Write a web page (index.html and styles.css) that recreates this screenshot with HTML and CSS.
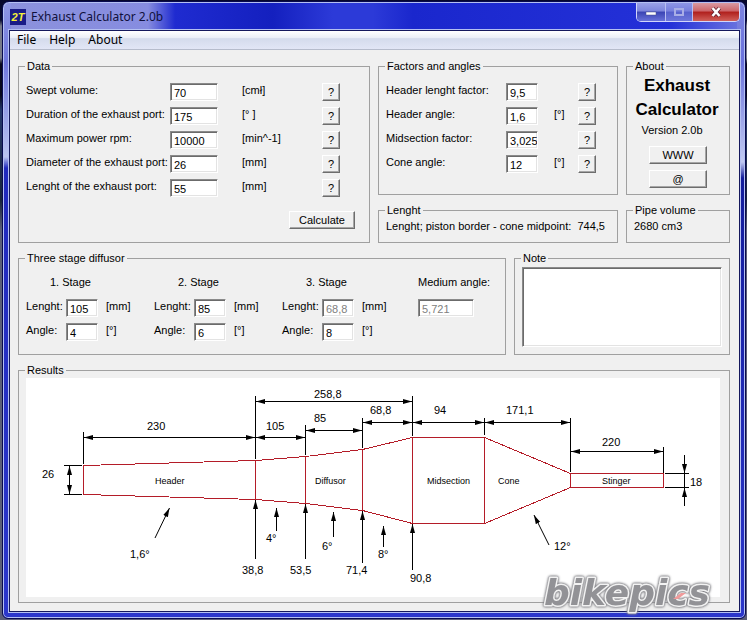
FILE: index.html
```html
<!DOCTYPE html>
<html lang="en">
<head>
<meta charset="utf-8">
<title>Exhaust Calculator 2.0b</title>
<link rel="stylesheet" href="styles.css">
</head>
<body>
<div class="window">
  <header class="titlebar">
    <svg class="app-icon" viewBox="0 0 16 16" aria-hidden="true"><rect width="16" height="16" fill="#1a1c86"/><text x="8" y="12" text-anchor="middle" class="app-icon-text">2T</text></svg>
    <h1 class="title">Exhaust Calculator 2.0b</h1>
    <div class="caption">
      <button type="button" class="cap cap-min" aria-label="Minimize"><svg width="12" height="12" viewBox="0 0 12 12"><rect x="1" y="6" width="10" height="3" fill="#fff" stroke="#4a4f88" stroke-width="0.5"/></svg></button>
      <button type="button" class="cap cap-max" aria-label="Maximize"><svg width="12" height="12" viewBox="0 0 12 12"><rect x="2" y="3" width="8" height="6" fill="none" stroke="#a9aee6" stroke-width="2"/></svg></button>
      <button type="button" class="cap cap-close" aria-label="Close"><svg width="12" height="12" viewBox="0 0 12 12"><path d="M2.5 2l7 8M9.500 2l-7 8" stroke="#5e2030" stroke-width="4"/><path d="M2.500 2l7 8M9.500 2l-7 8" stroke="#fff" stroke-width="2.600"/></svg></button>
    </div>
  </header>
  <div class="client">
    <nav class="menu"><button type="button">File</button><button type="button">Help</button><button type="button">About</button></nav>
    <form class="form">
      <div class="top">
        <fieldset class="group data">
          <legend>Data</legend>
          <div class="rows data-rows">
            <label for="sv">Swept volume:</label><input id="sv" value="70"><span>[cmł]</span><button type="button" class="btn help">?</button>
            <label for="du">Duration of the exhaust port:</label><input id="du" value="175"><span>[° ]</span><button type="button" class="btn help">?</button>
            <label for="rpm">Maximum power rpm:</label><input id="rpm" value="10000"><span>[min^-1]</span><button type="button" class="btn help">?</button>
            <label for="di">Diameter of the exhaust port:</label><input id="di" value="26"><span>[mm]</span><button type="button" class="btn help">?</button>
            <label for="le">Lenght of the exhaust port:</label><input id="le" value="55"><span>[mm]</span><button type="button" class="btn help">?</button>
          </div>
          <button type="button" class="btn calculate">Calculate</button>
        </fieldset>
        <fieldset class="group">
          <legend>Factors and angles</legend>
          <div class="rows factor-rows">
            <label for="hf">Header lenght factor:</label><input id="hf" value="9,5"><span></span><button type="button" class="btn help">?</button>
            <label for="ha">Header angle:</label><input id="ha" value="1,6"><span>[°]</span><button type="button" class="btn help">?</button>
            <label for="mf">Midsection factor:</label><input id="mf" value="3,025"><span></span><button type="button" class="btn help">?</button>
            <label for="ca">Cone angle:</label><input id="ca" value="12"><span>[°]</span><button type="button" class="btn help">?</button>
          </div>
        </fieldset>
        <fieldset class="group">
          <legend>About</legend>
          <div class="about">
            <h2>Exhaust<br>Calculator</h2>
            <p>Version 2.0b</p>
            <button type="button" class="btn wide">WWW</button>
            <button type="button" class="btn wide">@</button>
          </div>
        </fieldset>
        <fieldset class="group"><legend>Lenght</legend><p class="value">Lenght; piston border - cone midpoint:&nbsp; 744,5</p></fieldset>
        <fieldset class="group"><legend>Pipe volume</legend><p class="value">2680 cm3</p></fieldset>
      </div>
      <div class="middle">
        <fieldset class="group">
          <legend>Three stage diffusor</legend>
          <div class="stages">
            <div>
              <h3>1. Stage</h3>
              <div class="rows stage-rows">
                <label for="l1">Lenght:</label><input id="l1" value="105"><span>[mm]</span>
                <label for="a1">Angle:</label><input id="a1" value="4"><span>[°]</span>
              </div>
            </div>
            <div>
              <h3>2. Stage</h3>
              <div class="rows stage-rows">
                <label for="l2">Lenght:</label><input id="l2" value="85"><span>[mm]</span>
                <label for="a2">Angle:</label><input id="a2" value="6"><span>[°]</span>
              </div>
            </div>
            <div>
              <h3>3. Stage</h3>
              <div class="rows stage-rows">
                <label for="l3">Lenght:</label><input id="l3" value="68,8" disabled><span>[mm]</span>
                <label for="a3">Angle:</label><input id="a3" value="8"><span>[°]</span>
              </div>
            </div>
            <div class="medium">
              <label for="ma">Medium angle:</label>
              <input id="ma" value="5,721" disabled>
            </div>
          </div>
        </fieldset>
        <fieldset class="group note">
          <legend>Note</legend>
          <textarea aria-label="Note"></textarea>
        </fieldset>
      </div>
      <fieldset class="group results">
        <legend>Results</legend>
        <svg class="drawing" viewBox="26 378 694 219" role="img" aria-label="Exhaust pipe drawing">
          <defs>
            <marker id="arrow" markerUnits="userSpaceOnUse" markerWidth="10" markerHeight="6" refX="9" refY="3" orient="auto-start-reverse"><path d="M9 3L0 0.500V5.500Z"/></marker>
          </defs>
          <g class="pipe">
            <path d="M83.500 465.500L255.500 460.500L305.500 456.500L362.500 449.500L412.500 437.500H484.500L570.500 473.500H663.500V487.500H570.500L484.500 523.500H412.500L362.500 510.500L305.500 503.500L255.500 499.500L83.500 494.500Z"/>
            <path d="M255.500 460V499M305.500 456V503M362.500 449V510M412.500 437V523M484.500 437V523M570.500 473V487"/>
          </g>
          <g class="ext">
            <path d="M83.500 432V464M255.500 396V459M305.500 425V455M362.500 418V448M412.500 396V436M484.500 418V435M570.500 418V472M663.500 447V473M64 465.500H82M64 494.500H82M665 473.500H689M665 487.500H689M684.500 473V488"/>
          </g>
          <g class="dim">
            <path d="M84 437.500H255"/><path d="M256 437.500H305"/><path d="M256 401.500H412"/><path d="M306 430.500H362"/><path d="M363 422.500H412"/><path d="M413 422.500H484"/><path d="M485 422.500H570"/><path d="M571 451.500H663"/><path d="M69.500 466V494"/>
          </g>
          <g class="pointer">
            <path d="M684.500 455V473"/><path d="M684.500 506V488"/>
            <path d="M255.500 559V500"/><path d="M305.500 559V504"/><path d="M362.500 563V511"/><path d="M412.500 570V524"/>
            <path d="M276.500 531V508"/><path d="M333.500 537V512"/><path d="M383.500 547V526"/>
            <path d="M155 538L169.500 508"/><path d="M549 545L534 515"/>
          </g>
          <g class="num">
            <text x="147" y="430">230</text><text x="266" y="430">105</text><text x="314" y="398">258,8</text><text x="314" y="422">85</text><text x="370" y="414">68,8</text><text x="434" y="414">94</text><text x="506" y="414">171,1</text><text x="602" y="446">220</text><text x="690" y="486">18</text><text x="42" y="478">26</text>
            <text x="130" y="558">1,6°</text><text x="266" y="542">4°</text><text x="322" y="550">6°</text><text x="378" y="558">8°</text><text x="554" y="550">12°</text>
            <text x="242" y="574">38,8</text><text x="290" y="574">53,5</text><text x="346" y="574">71,4</text><text x="410" y="582">90,8</text>
          </g>
          <g class="part">
            <text x="155" y="484">Header</text><text x="315" y="484">Diffusor</text><text x="427" y="484">Midsection</text><text x="498" y="484">Cone</text><text x="602" y="484">Stinger</text>
          </g>
        </svg>
      </fieldset>
    </form>
  </div>
  <svg class="watermark" viewBox="0 0 196 40" role="img" aria-label="bikepics">
    <text x="98" y="27" text-anchor="middle" class="wm">bikepics</text>
    <path d="M144 21l8-6h5l-8 6z" fill="#f09a9a"/>
  </svg>
</div>
</body>
</html>
```
FILE: styles.css
```css
* {
  box-sizing: border-box;
}

body {
  margin: 0;
  padding: 1px 1px 1px 2px;
  min-height: 100vh;
  background: linear-gradient(#05062c 0, #0a0c30 20px, #777a88 26px, #777a88 58px, #08091c 64px, #08091c 95px, #25386a 110px, #18243c 200px, #5b5e78 230px, #5b5e78 100%);
  font: 11px/13px "Liberation Sans", Arial, sans-serif;
  color: #000;
}

h1, h2, h3, p {
  margin: 0;
  font-weight: normal;
}

button, input, textarea {
  font: inherit;
  color: inherit;
}

.window {
  position: relative;
  padding: 1px 5px 6px 6px;
  border: 1px solid #080a50;
  border-radius: 7px 7px 6px 6px;
  background:
    linear-gradient(#2b36cb, #2b36cb) bottom / 100% 8px no-repeat,
    linear-gradient(#8f97e4, #7078dc 60px, #b9c3f0 155px, #2029bd 166px, #2b36cb) left / 8px 100% no-repeat,
    linear-gradient(#7d84e0, #6a72dc 60px, #c2caf2 160px, #131c9c 176px, #2b36cb) right / 8px 100% no-repeat,
    linear-gradient(90deg, #8c92dc, #868ce0 145px, #1f2bd0 172px, #1420bf 270px, #2c3ad8 330px, #2c3ad8 370px, #1a27cd 410px, #2431d8 90%, #6f78e0);
  box-shadow: inset 0 0 0 1px #b4c0f2;
}

.titlebar {
  display: flex;
  align-items: center;
  height: 27px;
  padding-left: 1px;
}

.app-icon {
  width: 16px;
  height: 16px;
}

.app-icon-text {
  font: italic bold 11px "Liberation Sans", sans-serif;
  fill: #f4f03a;
}

.title {
  margin-left: 5px;
  font: 12px/16px "Noto Sans", "Open Sans", sans-serif;
  color: #10103c;
}

.caption {
  display: flex;
  align-self: flex-start;
  margin-left: auto;
  border: 1px solid #d2d6fa;
  border-top: 0;
  border-radius: 0 0 5px 5px;
  overflow: hidden;
}

.cap {
  display: grid;
  place-items: center;
  height: 18px;
  padding: 0;
  border: 0;
  border-right: 1px solid #b9bff2;
}

.cap-min {
  width: 29px;
  background: linear-gradient(#9aa1e8, #7d85dc 45%, #3a44b4 50%, #6871d8);
}

.cap-max {
  width: 27px;
  background: linear-gradient(#8d95e6, #7880dd 45%, #5660cc 50%, #6e77da);
}

.cap-close {
  width: 46px;
  border-right: 0;
  background: linear-gradient(#d99aa2, #cc6468 45%, #b01f1c 50%, #d0605a);
}

.client {
  border: 1px solid #14185c;
  background: #f0f0f0;
  box-shadow: 0 0 0 1px #b4c0f2;
}

.menu {
  display: flex;
  gap: 13px;
  height: 19px;
  padding-left: 7px;
  border-bottom: 1px solid #b6bccc;
  background: linear-gradient(#fff, #e9edf6 40%, #d4dbec 42%, #e2e6f6);
}

.menu button {
  padding: 0;
  border: 0;
  background: none;
  font: 12px/18px "Noto Sans", "Open Sans", sans-serif;
}

.form {
  display: grid;
  gap: 9px;
  padding: 10px 9px 8px 8px;
}

.top {
  display: grid;
  grid-template-columns: 352fr 240fr 104fr;
  grid-template-rows: 1fr auto;
  gap: 9px 8px;
}

.middle {
  display: grid;
  grid-template-columns: 488fr 216fr;
  gap: 8px;
}

.group {
  min-width: 0;
  margin: 0;
  padding: 0 7px;
  border: 1px solid #a0a0a0;
  white-space: nowrap;
}

.group legend {
  margin-left: -1px;
  padding: 0 2px;
}

.data {
  grid-row: span 2;
}

.rows {
  display: grid;
  grid-auto-rows: 18px;
  gap: 6px 0;
}

.rows label,
.rows span {
  line-height: 15px;
}

.data-rows,
.factor-rows {
  padding-top: 10px;
}

.data-rows {
  grid-template-columns: 144fr 72fr 80fr 40fr;
}

.factor-rows {
  grid-template-columns: 120fr 48fr 24fr 32fr;
}

.stage-rows {
  grid-template-columns: 40px 40px 1fr;
}

input,
textarea {
  border: 1px solid;
  border-color: #8a8a8a #fff #fff #8a8a8a;
  border-radius: 0;
  background: #fff;
  box-shadow: inset 1px 1px #6b6b6b, inset -1px -1px #e3e3e3;
}

input {
  width: 32px;
  height: 18px;
  padding: 2px 0 0 3px;
}

input:disabled {
  background: #fff;
  color: #808080;
}

.data-rows input {
  width: 48px;
}

.btn {
  height: 18px;
  padding: 0;
  border: 1px solid;
  border-color: #fff #6d6d6d #6d6d6d #fff;
  background: #f0f0f0;
  box-shadow: inset -1px -1px #a6a6a6;
  line-height: 15px;
}

.help {
  width: 18px;
}

.calculate {
  display: block;
  width: 66px;
  margin: 14px 7px 13px auto;
}

.about {
  text-align: center;
}

.about h2 {
  margin: 1px -4px 0 -6px;
  font-size: 17px;
  font-weight: bold;
  line-height: 24px;
}

.about p {
  margin: 2px 12px 9px 0;
}

.wide {
  display: block;
  width: 58px;
  margin: 0 auto 6px;
}

.value {
  padding: 3px 0 9px;
}

.stages {
  display: grid;
  grid-template-columns: 128fr 128fr 136fr 80fr;
  padding: 10px 0 13px;
}

.stages h3 {
  padding-left: 24px;
  margin-bottom: 10px;
  font-size: 11px;
  line-height: 14px;
}

.medium label {
  display: block;
  margin-bottom: 10px;
  line-height: 14px;
}

.medium input {
  display: block;
  width: 56px;
}

.note textarea {
  display: block;
  width: 100%;
  height: 80px;
  margin-top: 2px;
  resize: none;
}

.results {
  padding: 1px 9px 5px 7px;
}

.drawing {
  display: block;
  width: 100%;
  background: #fff;
}

.pipe path {
  fill: none;
  stroke: #b41c28;
  shape-rendering: crispEdges;
}

.ext path,
.dim path,
.pointer path {
  fill: none;
  stroke: #000;
}

.dim path {
  marker-start: url(#arrow);
  marker-end: url(#arrow);
}

.pointer path {
  marker-end: url(#arrow);
}

#arrow path {
  fill: #000;
  stroke: none;
  marker: none;
}

.num text {
  font-size: 11px;
}

.part text {
  font-size: 9px;
}

.watermark {
  position: absolute;
  right: 20px;
  bottom: 0;
  width: 196px;
  height: 40px;
  overflow: visible;
}

.wm {
  font: italic bold 36px "DejaVu Sans", sans-serif;
  fill: #929296;
  stroke: #f2f2f2;
  stroke-width: 3px;
  stroke-linejoin: round;
  paint-order: stroke;
  filter: drop-shadow(0 0 1px #77777c) drop-shadow(0 0 1px #8e8e92);
}
```
